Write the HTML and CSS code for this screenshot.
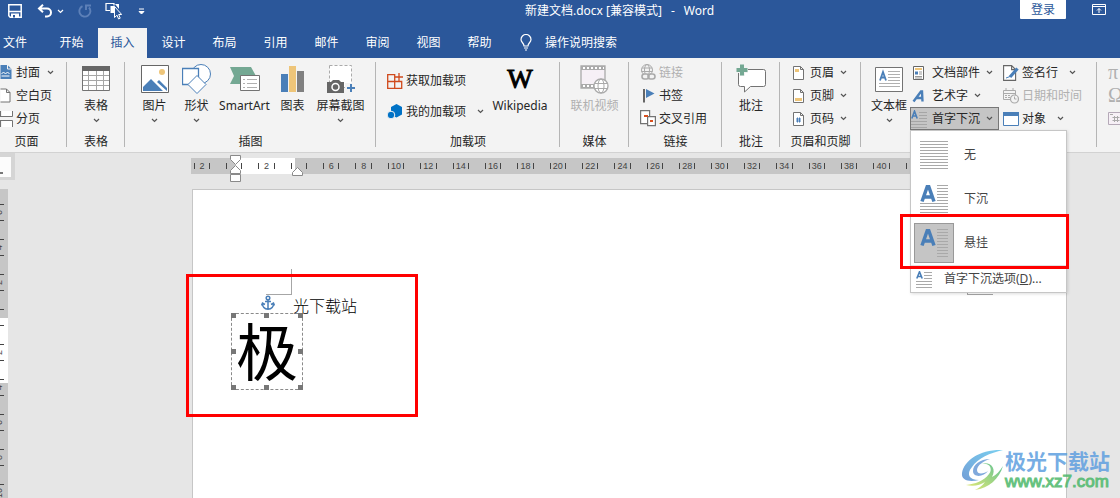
FILE: index.html
```html
<!DOCTYPE html>
<html lang="zh-CN">
<head>
<meta charset="utf-8">
<title>新建文档.docx - Word</title>
<link rel="stylesheet" href="styles.css">
</head>
<body>
<svg class="defs" aria-hidden="true">
  <symbol id="chev" viewBox="0 0 7 5"><path d="M1 1l2.5 2.5L6 1" fill="none" stroke="currentColor" stroke-width="1.2"/></symbol>
</svg>
<div class="app">
<header class="titlebar">
  <div class="quick">
    <button aria-label="保存"><svg width="16" height="16" viewBox="0 0 16 16"><path d="M1.8 1.8h12.4v12.4H3.2L1.800 12.800z" fill="none" stroke="#fff" stroke-width="1.500"/><path d="M2 8.500h12" stroke="#fff" stroke-width="1.500"/><path d="M4 14V10.500h8V14" fill="#fff"/><path d="M6 12h2v2.500H6z" fill="#2b579a"/></svg></button>
    <button aria-label="撤消"><svg width="16" height="14" viewBox="0 0 16 14"><path d="M2 4.500h8a4 4 0 0 1 0 8H8M6 .8L2 4.500l4 3.700" fill="none" stroke="#fff" stroke-width="2"/></svg></button>
    <button class="more" aria-label="撤消列表"><svg class="chev"><use href="#chev"/></svg></button>
    <button aria-label="恢复"><svg width="14" height="14" viewBox="0 0 14 14"><path d="M4.500 2.200A5.500 5.500 0 1 0 11 3.500M8 6V1.500h5" fill="none" stroke="#5d80b8" stroke-width="1.900"/></svg></button>
    <button class="touch" aria-label="触摸/鼠标模式"><svg width="17" height="18" viewBox="0 0 17 18"><path d="M5 8.500H1V1.500h8v2" fill="none" stroke="#fff" stroke-width="1.200"/><path d="M5.500 4h4v7h-4zM10 2h4v5z" fill="#fff"/><path d="M9.500 4.500v11l2.500-2.300 1.600 3.800 1.600-.8-1.500-3.700h3z" fill="#2b579a" stroke="#fff"/></svg></button>
    <button class="custom" aria-label="自定义快速访问工具栏"><svg width="7" height="7" viewBox="0 0 7 7"><path d="M1 1h5M1 3.500h5L3.500 6z" fill="#fff" stroke="#fff" stroke-width="1"/></svg></button>
  </div>
  <div class="doc-title"><span>新建文档.docx [兼容模式]</span><span>-</span><span>Word</span></div>
  <button class="login">登录</button>
  <button class="display" aria-label="功能区显示选项"><svg width="14" height="11" viewBox="0 0 14 11"><path d="M.5.5h13v10H.5zM.5 2.500h13M7 9V4.500M5 6.500l2-2 2 2" fill="none" stroke="#fff"/></svg></button>
</header>
<nav class="tabs">
  <button class="file">文件</button>
  <button>开始</button>
  <button class="active">插入</button>
  <button>设计</button>
  <button>布局</button>
  <button>引用</button>
  <button>邮件</button>
  <button>审阅</button>
  <button>视图</button>
  <button>帮助</button>
  <button class="tell"><svg width="12" height="17" viewBox="0 0 12 17"><path d="M4 12c0-3-3-3.500-3-6.500a5 5 0 0 1 10 0C11 8.500 8 9 8 12zM4 14h4M5 16h2" fill="none" stroke="#fff" stroke-width="1.200"/></svg>操作说明搜索</button>
</nav>

<div class="ribbon">
  <section class="group g-page">
    <div class="rows">
      <button class="row"><svg width="12" height="15" viewBox="0 0 12 15"><path d="M0 0h7l4 4v10H0z" fill="#4a7fb8"/><path d="M7 0v4h4" fill="none" stroke="#f3f3f3"/><path d="M1 9l2-2 2 2 2-2 2 2M1 11h8" fill="none" stroke="#fff"/></svg>封面<svg class="chev"><use href="#chev"/></svg></button>
      <button class="row"><svg width="12" height="15" viewBox="0 0 12 15"><path d="M0 1h6l3.500 3.500V14H0M6 1v3.500h3.500" fill="#fff" stroke="#737373"/></svg>空白页</button>
      <button class="row"><svg width="13" height="16" viewBox="0 0 13 16"><path d="M2 0h10v5H2zM2 10h10v6H2z" fill="#fff"/><path d="M0 5.500h12.500V0M0 9.500h12.500V16M.5 9.500V16M.5 5.500V0" fill="none" stroke="#737373"/></svg>分页</button>
    </div>
    <h2>页面</h2>
  </section>

  <section class="group g-table">
    <div class="large-set">
      <button class="large"><span class="pic"><svg width="28" height="26" viewBox="0 0 28 26"><path d="M.5.5h27v24H.5z" fill="#fff" stroke="#737373"/><path d="M0 0h28v5H0z" fill="#666"/><path d="M1 9.500h26M1 14.500h26M1 19.500h26M6.500 5v19M14.500 5v19M21.500 5v19" stroke="#a6a6a6"/></svg></span>表格<svg class="chev"><use href="#chev"/></svg></button>
    </div>
    <h2>表格</h2>
  </section>

  <section class="group g-illus">
    <div class="large-set">
      <button class="large"><span class="pic"><svg width="28" height="28" viewBox="0 0 28 28"><path d="M.5.5h27v27H.5z" fill="#fff" stroke="#666"/><circle cx="21" cy="7" r="3" fill="#eec579"/><path d="M2 26v-4l8-8 12 12zM16 17l2-2 8 8v3z" fill="#4a7fb8"/></svg></span>图片<svg class="chev"><use href="#chev"/></svg></button>
      <button class="large"><span class="pic"><svg width="30" height="30" viewBox="0 0 30 30"><circle cx="19" cy="10" r="9.500" fill="#fff" stroke="#4a7fb8"/><path d="M.5 4.500h16v16H.5z" fill="#fff" stroke="#4a7fb8" stroke-width="1.300"/><path d="M15 11.500l9 9-9 9-9-9z" fill="#fff" stroke="#4a7fb8"/></svg></span>形状<svg class="chev"><use href="#chev"/></svg></button>
      <button class="large wide"><span class="pic"><svg width="30" height="26" viewBox="0 0 30 26"><path d="M0 1h21l5 9-5 8H0l4-8z" fill="#74a893"/><path d="M10.500 9.500h19v15h-19z" fill="#fff" stroke="#737373"/><path d="M13 13.500h2M13 17.500h2M13 21.500h2M17 13.500h10M17 17.500h10M17 21.500h10" stroke="#b0b0b0"/></svg></span>SmartArt</button>
      <button class="large"><span class="pic"><svg width="24" height="28" viewBox="0 0 24 28"><path d="M0 9h7v18H0z" fill="#4a7fb8"/><path d="M8 1h7v26H8z" fill="#eec579"/><path d="M16 6h7v21h-7z" fill="#808080"/></svg></span>图表</button>
      <button class="large wide"><span class="pic"><svg width="28" height="28" viewBox="0 0 28 28"><path d="M2.500.5h22v22h-22z" fill="#fff" stroke="#aaa" stroke-dasharray="3 2"/><path d="M0 17h4l2-2h6l2 2h3v11H0z" fill="#666"/><circle cx="8.500" cy="22" r="3.500" fill="#666" stroke="#fff" stroke-width="1.500"/><path d="M18 18h10v9H18z" fill="#f3f3f3"/><path d="M24 19v8M20 23h8" stroke="#4a7fb8" stroke-width="2"/></svg></span>屏幕截图<svg class="chev"><use href="#chev"/></svg></button>
    </div>
    <h2>插图</h2>
  </section>

  <section class="group g-addins">
    <div class="addins">
      <div class="two-rows">
        <button class="row"><svg width="16" height="16" viewBox="0 0 16 16"><path d="M.7 1.700h7v13.600h-7zM.7 8.500h14v6.800H.7M12 0v8M8 4h8" fill="none" stroke="#d04a1c" stroke-width="1.300"/></svg>获取加载项</button>
        <button class="row"><svg width="16" height="15" viewBox="0 0 16 15"><path d="M9.500 0L15 3v7.500l-5.500 3L4 11V3z" fill="#0072c6"/><circle cx="4" cy="11" r="3.800" fill="#0072c6" stroke="#f3f3f3"/></svg>我的加载项<svg class="chev far"><use href="#chev"/></svg></button>
      </div>
      <button class="large wiki"><span class="pic wiki-w">W</span>Wikipedia</button>
    </div>
    <h2>加载项</h2>
  </section>

  <section class="group g-media">
    <div class="large-set">
      <button class="large" disabled><span class="pic"><svg width="29" height="30" viewBox="0 0 29 30"><path d="M1 2h24v22H1z" fill="#f6f0f6" stroke="#aaa" stroke-width="1.300"/><path d="M1 4h24M1 22h24" stroke="#aaa" stroke-width="4"/><path d="M3 4h21M3 22h21" stroke="#fff" stroke-width="2" stroke-dasharray="2 2"/><circle cx="21" cy="22" r="7" fill="#fff" stroke="#aaa" stroke-width="1.300"/><ellipse cx="21" cy="22" rx="3" ry="7" fill="none" stroke="#aaa"/><path d="M15 19.500h12M15 24.500h12" stroke="#aaa"/></svg></span>联机视频</button>
    </div>
    <h2>媒体</h2>
  </section>

  <section class="group g-links">
    <div class="rows">
      <button class="row" disabled><svg width="16" height="17" viewBox="0 0 16 17"><circle cx="7" cy="6" r="5.500" fill="none" stroke="#aaa"/><ellipse cx="7" cy="6" rx="2.500" ry="5.500" fill="none" stroke="#aaa"/><path d="M2 4h10M1.500 7.500h11" stroke="#aaa"/><rect x="2" y="10" width="7" height="5" rx="2.500" fill="#f3f3f3" stroke="#aaa" stroke-width="1.600"/><rect x="8" y="10" width="7" height="5" rx="2.500" fill="none" stroke="#aaa" stroke-width="1.600"/></svg>链接</button>
      <button class="row"><svg width="16" height="15" viewBox="0 0 16 15"><path d="M4 1v13.500" stroke="#666" stroke-width="2"/><path d="M6 1l8.500 4.500L6 10z" fill="#4a7fb8"/></svg>书签</button>
      <button class="row"><svg width="16" height="17" viewBox="0 0 16 17"><path d="M.6.6h9v13h-9z" fill="#fff" stroke="#737373" stroke-width="1.200"/><path d="M7.600 6.600h7.800v9H7.600z" fill="#fff" stroke="#737373" stroke-width="1.200"/><path d="M4 5h4v2H4zM10 10h3v2h-3z" fill="#d9501e"/></svg>交叉引用</button>
    </div>
    <h2>链接</h2>
  </section>

  <section class="group g-comment">
    <div class="large-set">
      <button class="large"><span class="pic"><svg width="30" height="30" viewBox="0 0 30 30"><path d="M4.500 5.500h23q2 0 2 2v13q0 2-2 2h-13l-6 5.500v-5.500h-4q-2 0-2-2v-13q0-2 2-2z" fill="#fff" stroke="#737373"/><path d="M6 0v12M0 6h12" stroke="#f3f3f3" stroke-width="6"/><path d="M6 .500v11M.500 6h11" stroke="#74a893" stroke-width="4"/></svg></span>批注</button>
    </div>
    <h2>批注</h2>
  </section>

  <section class="group g-header">
    <div class="rows">
      <button class="row"><svg width="11" height="14" viewBox="0 0 11 14"><path d="M.5.500h7l3 3v10H.5zM7.500.500v3h3" fill="#fff" stroke="#737373"/><path d="M2 3h4v3H2z" fill="#eec579"/></svg>页眉<svg class="chev"><use href="#chev"/></svg></button>
      <button class="row"><svg width="11" height="14" viewBox="0 0 11 14"><path d="M.5.500h7l3 3v10H.5zM7.500.500v3h3" fill="#fff" stroke="#737373"/><path d="M2 9h7v3H2z" fill="#eec579"/></svg>页脚<svg class="chev"><use href="#chev"/></svg></button>
      <button class="row"><svg width="11" height="14" viewBox="0 0 11 14"><path d="M.5.500h7l3 3v10H.5zM7.500.500v3h3" fill="#fff" stroke="#737373"/><path d="M4.500 5.500v5M6.500 5.500v5M3 7h5M3 9h5" stroke="#4a7fb8"/></svg>页码<svg class="chev"><use href="#chev"/></svg></button>
    </div>
    <h2>页眉和页脚</h2>
  </section>

  <section class="group g-text">
    <div class="text-set">
      <button class="large"><span class="pic"><svg width="28" height="25" viewBox="0 0 28 25"><path d="M.5.500h27v24H.5z" fill="#fff" stroke="#737373"/><path d="M5 13.500L8 5l3 8.500M6 10.500h4" fill="none" stroke="#4a7fb8" stroke-width="1.800"/><path d="M13 4.500h12M13 7.500h12M13 10.500h12M13 13.500h12M4 16.500h21M4 19.500h21" stroke="#b0b0b0"/></svg></span>文本框<svg class="chev"><use href="#chev"/></svg></button>
      <div class="rows middle">
        <button class="row"><svg width="16" height="14" viewBox="0 0 16 14"><path d="M2.500.500h10v13h-10z" fill="#fff" stroke="#666"/><path d="M4 2h7v2H4z" fill="#eec579"/><path d="M4 5.500h3v3H4z" fill="#4a7fb8"/><path d="M8 6h3M8 8h3M4 10.500h7M4 12h7" stroke="#999"/></svg>文档部件<svg class="chev"><use href="#chev"/></svg></button>
        <button class="row"><svg width="16" height="14" viewBox="0 0 16 14"><path d="M2.500 12.500L10 2.500h1l.5 10M5.500 9h6" fill="none" stroke="#4a7fb8" stroke-width="2.400"/></svg>艺术字<svg class="chev"><use href="#chev"/></svg></button>
        <div class="drop">
          <button class="row pressed" aria-expanded="true"><svg width="16" height="18" viewBox="0 0 16 18"><path d="M.8 8.500L3.500 1.200l2.700 7.300M2 6h3" fill="none" stroke="#4a7fb8" stroke-width="1.600"/><path d="M8 2.500h8M8 5.500h8M8 8.500h8M0 11.500h16M0 14.500h16M0 17.500h16" stroke="#a6a6a6"/></svg>首字下沉<svg class="chev"><use href="#chev"/></svg></button>
          <div class="menu">
            <button class="option"><span class="thumb"><svg width="28" height="28" viewBox="0 0 28 28"><path d="M0 .500h28M0 3.500h28M0 6.500h28M0 9.500h28M0 12.500h28M0 15.500h28M0 18.500h28M0 21.500h28M0 24.500h28M0 27.500h28" stroke="#a9a9a9"/></svg></span>无</button>
            <button class="option"><span class="thumb"><svg width="28" height="28" viewBox="0 0 28 28"><path d="M2 16.500L7.300 1.500h1.400L14 16.500M4 12h8" fill="none" stroke="#4a7fb8" stroke-width="3.500"/><path d="M17 .500h11M17 3.500h11M17 6.500h11M17 9.500h11M17 12.500h11M17 15.500h11M0 18.500h28M0 21.500h28M0 24.500h28M0 27.500h28" stroke="#a9a9a9"/></svg></span>下沉</button>
            <button class="option chosen"><span class="thumb"><svg width="28" height="28" viewBox="0 0 28 28"><path d="M2 16.500L7.300 1.500h1.400L14 16.500M4 12h8" fill="none" stroke="#4a7fb8" stroke-width="3.500"/><path d="M17 .500h11M17 3.500h11M17 6.500h11M17 9.500h11M17 12.500h11M17 15.500h11M17 18.500h11M17 21.500h11M17 24.500h11M17 27.500h11" stroke="#a9a9a9"/></svg></span>悬挂</button>
            <button class="settings"><svg width="16" height="17" viewBox="0 0 16 17"><path d="M.8 7.500L3.500.800l2.700 6.700M2 5.500h3" fill="none" stroke="#4a7fb8" stroke-width="1.600"/><path d="M8 1.500h8M8 4.500h8M8 7.500h8M0 10.500h16M0 13.500h16M0 16.500h16" stroke="#a9a9a9"/></svg><span>首字下沉选项(<u>D</u>)...</span></button>
            <div class="redbox pick"></div>
          </div>
        </div>
      </div>
      <div class="rows">
        <button class="row"><svg width="16" height="16" viewBox="0 0 16 16"><path d="M.6.600h8l4 4v10.800h-12zM8.600.600v4h4" fill="#fff" stroke="#666" stroke-width="1.100"/><path d="M14.500 3.500L7 12" stroke="#4a7fb8" stroke-width="3.200"/><path d="M3 13l4-1.500" stroke="#4a7fb8"/></svg>签名行<svg class="chev far"><use href="#chev"/></svg></button>
        <button class="row" disabled><svg width="16" height="16" viewBox="0 0 16 16"><path d="M.5 2.500h12v9H.5zM.5 5.500h12M3 0v3M10 0v3" fill="none" stroke="#aaa"/><path d="M2 7.500h6M2 9.500h5" stroke="#aaa" stroke-dasharray="2 1"/><circle cx="11.500" cy="11" r="4" fill="#f3f3f3" stroke="#aaa" stroke-width="1.200"/><path d="M11.500 8.500V11h2" fill="none" stroke="#aaa"/></svg>日期和时间</button>
        <button class="row"><svg width="16" height="14" viewBox="0 0 16 14"><path d="M.5.500h15v13H.5z" fill="#fff" stroke="#4a7fb8"/><path d="M0 0h16v4H0z" fill="#4a7fb8"/></svg>对象<svg class="chev far"><use href="#chev"/></svg></button>
      </div>
    </div>
  </section>

  <section class="group g-symbol">
    <div class="rows">
      <button class="row glyph" disabled>π</button>
      <button class="row glyph" disabled>Ω</button>
      <button class="row" disabled aria-label="编号"><svg width="16" height="13" viewBox="0 0 16 13"><path d="M.500.500h15v12H.5z" fill="#f6f0f6" stroke="#b5a9b8"/><path d="M2 2.500h3M6.500 4v6M9.500 4v6M4.500 5.500h7M4.500 8.500h7" stroke="#aaa"/></svg></button>
    </div>
  </section>
</div>

<main class="workspace">
  <div class="corner"><div class="tabstop"></div></div>
  <div class="vruler" aria-hidden="true">
    <span>6</span><span>4</span><span>2</span><span></span><span>2</span><span>4</span><span>6</span><span>8</span><span>10</span>
  </div>
  <div class="hruler">
    <span>2</span><span></span><span>2</span><span></span><span>6</span><span>8</span><span>10</span><span>12</span><span>14</span><span>16</span><span>18</span><span>20</span><span>22</span><span>24</span><span>26</span><span>28</span><span>30</span><span>32</span><span>34</span><span>36</span><span>38</span><span>40</span><span></span>
    <svg class="indent-left" width="12" height="29" viewBox="0 0 12 29"><path d="M.5 1.500h10v4l-5 5-5-5zM5.500 11.500l5 5v3H.5v-3zM.5 20.500h10v7H.5z" fill="#fff" stroke="#8a8a8a"/></svg>
    <svg class="indent-right" width="12" height="12" viewBox="0 0 12 12"><path d="M5.500 1.500l5 5v3H.5v-3z" fill="#fff" stroke="#8a8a8a"/></svg>
  </div>
  <article class="page">
    <div class="frame">
      极
      <i class="h tl"></i><i class="h tc"></i><i class="h tr"></i><i class="h ml"></i><i class="h mr"></i><i class="h bl"></i><i class="h bc"></i><i class="h br"></i>
      <svg class="anchor" width="14" height="16" viewBox="0 0 14 16"><circle cx="7" cy="3" r="1.800" fill="none" stroke="#4a7fb8" stroke-width="1.500"/><path d="M7 5v9M4 6.500h6M1.500 8.500c0 3.500 2.500 5.500 5.500 5.800 3-.3 5.500-2.300 5.500-5.800M.5 10.500l1-2.500 2.500 1.500M13.500 10.500l-1-2.500-2.500 1.500" fill="none" stroke="#4a7fb8" stroke-width="1.500"/></svg>
    </div>
    <p>光下载站</p>
    <div class="crop"></div>
    <div class="crop-right"></div>
    <div class="redbox result"></div>
  </article>
  <div class="watermark">
    <svg width="44" height="42" viewBox="0 0 44 42"><defs><linearGradient id="wb" x1="0" y1="1" x2="1" y2="0"><stop offset="0" stop-color="#5b8fd0"/><stop offset="1" stop-color="#63c8ee"/></linearGradient><linearGradient id="wg" x1="0" y1="1" x2="1" y2="0"><stop offset="0" stop-color="#e3e65a"/><stop offset="1" stop-color="#42b883"/></linearGradient></defs><path d="M42 1C20 0 3 11 1 24c-1 8 8 9 17 7C8 31 5 25 11 18 17 9 29 4 42 1z" fill="url(#wb)"/><path d="M29 10c-10 0-17 6-17 12 0 7 11 6 15 0-4 3-11 4-11-1 0-5 7-9 13-11z" fill="#6a9bd6"/><path d="M20 15c9-2 12 5 8 10-5 7-14 10-23 11 8 2 14 0 19-3-3 4-6 6-10 8C28 39 38 30 42 17c-3 5-7 9-11 11 5-9-2-16-11-13z" fill="url(#wg)"/></svg>
    <div class="brand"><strong>极光下载站</strong><span>www.xz7.com</span></div>
  </div>
</main>
</div>
</body>
</html>
```
FILE: styles.css
```css
* { box-sizing: border-box; }
body {
  margin: 0;
  font: 12px/16px "Noto Sans", "Noto Sans CJK SC", sans-serif;
  color: #262626;
  overflow: hidden;
}
button {
  font: inherit;
  color: inherit;
  background: none;
  border: 0;
  padding: 0;
  margin: 0;
  white-space: nowrap;
}
svg { display: block; flex: none; }
.defs { position: absolute; width: 0; height: 0; }
.chev { width: 7px; height: 5px; color: #555; }
.app { display: flex; flex-direction: column; height: 100vh; }

.titlebar {
  display: flex;
  height: 28px;
  background: #2b579a;
  color: #fff;
}
.quick { display: flex; align-items: center; height: 22px; padding-left: 7px; flex: 0 0 525px; }
.quick button + button { margin-left: 14px; }
.quick .more.more { margin-left: 4px; }
.quick .more .chev { color: #fff; }
.quick .touch.touch { margin-left: 13px; }
.quick .custom.custom { margin-left: 16px; }
.doc-title { display: flex; gap: 9px; line-height: 22px; flex: 1; }
.login { width: 46px; height: 19px; background: #fff; color: #2b579a; border-radius: 0 0 1px 1px; }
.display { height: 19px; padding: 0 14px 0 26px; }

.tabs { display: flex; gap: 2px; height: 30px; background: #2b579a; color: #fff; }
.tabs button { width: 49px; padding-bottom: 1px; }
.tabs .file { width: 45px; text-align: left; padding-left: 3px; }
.tabs .active { background: #f3f3f3; color: #2b579a; }
.tabs .tell { display: flex; align-items: center; gap: 13px; width: auto; margin-left: 14px; }

.ribbon {
  display: flex;
  height: 95px;
  padding-top: 3px;
  background: #f3f3f3;
  border-bottom: 1px solid #d2d2d2;
}
.group { position: relative; display: flex; flex-direction: column; flex: none; }
.group::after {
  content: "";
  position: absolute;
  right: 0;
  top: 1px;
  bottom: 5px;
  width: 1px;
  background: #b5b5b5;
}
.group h2 { margin: 4px 0 0; font-size: 12px; font-weight: 400; text-align: center; }
.g-page { width: 67px; }
.g-page h2 { padding-right: 14px; }
.g-table { width: 58px; }
.g-illus { width: 251px; }
.g-addins { width: 184px; }
.g-media { width: 69px; }
.g-links { width: 93px; padding-left: 11px; }
.g-links h2 { padding-right: 11px; }
.g-comment { width: 58px; }
.g-header { width: 81px; }
.g-header .rows { padding-left: 13px; }
.g-text { width: 236px; }
.g-symbol { width: 60px; padding-left: 11px; }

.rows { display: grid; grid-template-rows: repeat(3, 23px); justify-content: start; }
.row { display: flex; align-items: center; gap: 3px; text-align: left; }
.row .chev { margin-left: 4px; }
.row .far { margin-left: 8px; }
.g-page .row > svg:first-child { width: 13px; }
.g-header .row { gap: 6px; }
.g-header .row .chev { margin-left: 0; }
button:disabled { color: #b0b0b0; }

.large-set { display: flex; justify-content: center; height: 69px; }
.large { display: flex; flex-direction: column; align-items: center; width: 42px; line-height: 18px; }
.large .pic { display: flex; align-items: center; justify-content: center; height: 36px; }
.large .chev { margin-top: 3px; }
.large.wide { width: 54px; }

.addins { display: flex; height: 69px; padding-left: 11px; }
.two-rows { display: grid; grid-template-rows: 31px 31px; padding-top: 4px; width: 100px; }
.large.wiki { width: 66px; }
.wiki-w { font: 27px/36px "Liberation Serif", serif; color: #000; -webkit-text-stroke: 1px #000; }

.text-set { display: flex; height: 69px; padding-left: 7px; }
.text-set .rows + .rows { padding-left: 3px; }
.text-set .rows .row { padding-left: 1px; }
.text-set .middle .row { gap: 5px; }
.text-set .middle .chev { margin-left: 1px; }
.drop { position: relative; display: flex; }
.row.pressed { width: 89px; background: #c5c5c5; border: 1px solid #777; }
.row.pressed.pressed { padding-left: 0; }
.glyph { font: 20px/23px "Liberation Serif", serif; }
.menu {
  position: absolute;
  z-index: 5;
  top: 23px;
  left: 0;
  width: 157px;
  padding-top: 2px;
  background: #fff;
  border: 1px solid #c6c6c6;
  box-shadow: 1px 1px 3px #0002;
  color: #444;
}
.option { display: flex; align-items: center; gap: 10px; width: 100%; height: 44px; padding-left: 3px; }
.thumb { display: grid; place-items: center; width: 40px; height: 40px; border: 1px solid transparent; }
.chosen .thumb { background: #c5c5c5; border-color: #999; }
.settings { display: flex; align-items: center; gap: 12px; width: 100%; height: 27px; padding-left: 5px; border-top: 1px solid #e1e1e1; }

.redbox { position: absolute; border: 3px solid #f00; pointer-events: none; }
.pick { left: -11px; right: -3px; bottom: 23px; height: 55px; }

.workspace { position: relative; flex: 1; min-height: 0; background: #e6e6e6; overflow: hidden; display: grid; grid-template: 36px 1fr / 192px 1fr; }
.corner { width: 15px; height: 27px; padding: 3px 4px 3px 0; background: #d5d5d5; }
.tabstop { height: 20px; margin-top: 1px; background: #fcfcfc; }
.tabstop::before { content: ""; display: block; width: 3px; height: 15px; border-bottom: 2px solid #777; }
.hruler {
  grid-area: 1 / 2;
  position: relative;
  display: grid;
  grid-template-columns: 27px repeat(22, 1fr);
  width: 739px;
  height: 16px;
  margin: 5px 0 0 -1px;
  background: linear-gradient(90deg, #c6c6c6 44px, #fff 44px 104px, #c6c6c6 104px);
  font: 9px/16px "Liberation Sans", sans-serif;
  color: #444;
}
.hruler span { display: flex; justify-content: space-between; align-items: center; padding: 0 8px; }
.hruler span:first-child { padding-left: 3px; }
.hruler span::before, .hruler span::after { content: ""; width: 1px; height: 6px; background: #444; }
.indent-left { position: absolute; left: 39px; top: -4px; }
.indent-right { position: absolute; left: 101px; top: 8px; }
.vruler {
  grid-area: 2 / 1;
  display: flex;
  flex-direction: column;
  width: 8px;
  overflow: hidden;
  padding-top: 6px;
  background: linear-gradient(#c6c6c6 129px, #fff 129px 194px, #c6c6c6 194px);
  font: 9px/9px "Liberation Sans", sans-serif;
  color: #444;
}
.vruler span {
  display: flex;
  flex: 0 0 35px;
  justify-content: space-between;
  align-items: center;
  padding: 9px 0;
  writing-mode: vertical-rl;
  transform: rotate(180deg);
  width: 9px;
  margin-left: -5px;
}
.vruler span::before, .vruler span::after { content: ""; height: 1px; width: 9px; background: #444; }
.page {
  grid-area: 2 / 2;
  position: relative;
  display: flex;
  align-items: flex-start;
  margin-right: 53px;
  padding: 106px 0 0 38px;
  background: #fff;
  border: 1px solid #c6c6c6;
  border-bottom: 0;
  color: #000;
  font-family: "Noto Sans CJK SC", sans-serif;
}
.frame {
  position: relative;
  width: 72px;
  height: 77px;
  margin-top: 17px;
  border: 1px dashed #8a8a8a;
  font-size: 62px;
  line-height: 70px;
  font-weight: 400;
  text-align: center;
}
.page p { margin: 0 0 0 -10px; font-size: 16px; line-height: 18px; font-weight: 300; z-index: 1; }
.h { position: absolute; width: 5px; height: 5px; background: #777; }
.tl, .tc, .tr { top: -1px; }
.bl, .bc, .br { bottom: -1px; }
.ml, .mr { top: 35px; }
.tl, .ml, .bl { left: -1px; }
.tc, .bc { left: 32px; }
.tr, .mr, .br { right: -1px; }
.anchor { position: absolute; left: 29px; top: -19px; }
.crop { position: absolute; left: 73px; top: 79px; width: 26px; height: 26px; border: solid #a6a6a6; border-width: 0 1px 1px 0; }
.crop-right { position: absolute; right: 73px; top: 79px; width: 26px; height: 26px; border: solid #a6a6a6; border-width: 0 0 1px 1px; }
.result { left: -7px; top: 84px; width: 232px; height: 143px; }
.watermark { position: absolute; right: 10px; bottom: 6px; display: flex; align-items: center; opacity: .85; }
.brand { display: flex; flex-direction: column; }
.brand strong { font: 700 21px/24px "Noto Sans CJK SC", sans-serif; color: #5f9fe0; }
.brand span { font: 17px/20px "Liberation Sans", sans-serif; color: #4cb86a; -webkit-text-stroke: 1px #4cb86a; }
```
